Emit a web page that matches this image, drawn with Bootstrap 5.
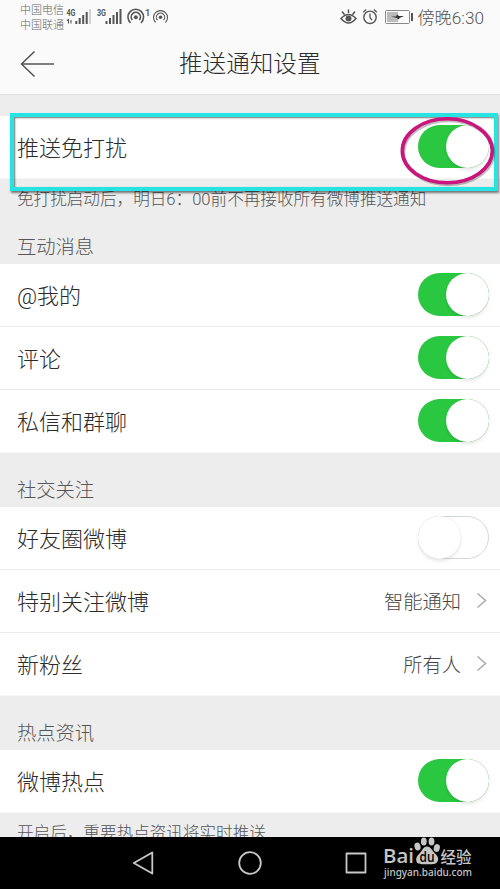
<!DOCTYPE html>
<html lang="zh-CN">
<head>
<meta charset="utf-8">
<meta name="viewport" content="width=device-width, initial-scale=1">
<title>推送通知设置</title>
<link href="https://cdn.jsdelivr.net/npm/bootstrap@5.3.0/dist/css/bootstrap.min.css" rel="stylesheet">
<style>
body{font-family:Roboto,"Noto Sans CJK SC",sans-serif;font-weight:300;color:#2b2b2b;background:#ededed;width:500px;height:889px}
.screen{height:889px}
.top-area{height:95px;background:#fafafa;border-bottom:1px solid #dcdcdc}
.status{height:34px;padding:0 16px 0 20px;color:#666}
.carrier{font-size:11px;line-height:15px;width:46px;padding-top:2px;color:#666}
.clock{font-size:17.2px;line-height:34px;color:#555;padding-top:1px}
.title-bar{height:60px;padding-left:20px}
.title-text{font-size:23.6px;line-height:60px;margin-left:125px}
.setting{height:63px;font-size:22px;padding:2px 11px 0 17px;background:#fff;border:0;border-bottom:1px solid #ebebeb;color:#2b2b2b}
.setting:last-child{border-bottom-color:#f6f6f6}
.section-name{font-size:19.3px;line-height:28px;color:#555;padding-left:17px}
.hint{font-size:16.6px;line-height:24px;color:#555;padding-left:17px}
.val{font-size:19.3px;color:#444;margin-right:16px;padding-top:2px}
.switch{width:71px;height:43px;border-radius:22px;background:#29c840;display:flex;justify-content:flex-end;margin-bottom:3px}
.switch .knob{width:43px;height:43px;border-radius:50%;background:#fff;box-shadow:0 3px 3px rgba(0,0,0,.07),0 0 1px rgba(0,0,0,.2)}
.switch.off{background:#fff;border:1px solid #d2dad5;justify-content:flex-start}
.switch.off .knob{margin:-1px}
.nav-keys{height:52px;background:#000}
.frame-mark{left:10px;top:113px;width:488px;height:78px;border:4px solid #27e4e4;box-shadow:1px 2px 2px rgba(0,0,0,.5),inset 1px 1px 2px rgba(0,0,0,.55)}
.ring-mark{left:396px;top:112px}
.brand{left:376px;top:832px}
</style>
<script src="https://cdn.jsdelivr.net/npm/bootstrap@5.3.0/dist/js/bootstrap.bundle.min.js"></script>
</head>
<body class="overflow-hidden">
<div class="screen position-relative d-flex flex-column overflow-hidden">
  <header class="top-area flex-shrink-0">
    <div class="status d-flex align-items-center">
      <div class="carrier text-nowrap">中国电信<br>中国联通</div>
      <svg width="106" height="34" viewBox="66 0 106 34" fill="none" stroke="#555">
        <g font-family="Roboto" font-weight="700" fill="#555" stroke="none">
          <text x="66.500" y="15.500" font-size="9.500" textLength="9" lengthAdjust="spacingAndGlyphs">4G</text>
          <text x="97" y="15.500" font-size="9.500" textLength="9" lengthAdjust="spacingAndGlyphs">3G</text>
          <text x="145" y="16" font-size="9.500" font-weight="500">1</text>
        </g>
        <path d="M67 20.500l1.500-1v4M71 20v3.500" stroke-width="1.100"/>
        <path d="M76.300 24v-3M79.700 24v-6M83.200 24v-9M86.700 24v-12" stroke-width="2"/>
        <path d="M90 24V9" stroke="#d2d2d2" stroke-width="2"/>
        <path d="M106.500 24v-3M110 24v-6M113.500 24v-9M117 24v-12M120.500 24V9" stroke-width="2"/>
        <path d="M130.500 22.800a7.800 7.800 0 1 1 10.500 0M132.300 20a4.600 4.600 0 1 1 7 0" stroke-width="1.600"/>
        <circle cx="135.800" cy="17.300" r="2" fill="#555" stroke="none"/>
        <path d="M155.500 22.500a7 7 0 1 1 10 0M157.500 20.200a4.200 4.200 0 1 1 6 0" stroke-width="1.100"/>
        <circle cx="160.500" cy="17.200" r="1.800" fill="#555" stroke="none"/>
      </svg>
      <svg class="ms-auto" width="78" height="34" viewBox="335 0 78 34" fill="none" stroke="#555">
        <path d="M341 18.500q7.500-8 15 0q-7.500 9-15 0zM342 11.500l2.500 3M348.500 9.500v3.500M355 11.500l-2.500 3" stroke-width="1.500"/>
        <circle cx="348.500" cy="18.500" r="3" fill="#555" stroke="none"/>
        <circle cx="370" cy="17.300" r="6.200" stroke-width="1.400"/>
        <path d="M370 13.500v4.200l2 2.500M363.200 12.200l3-2.700M376.800 12.200l-3-2.700" stroke-width="1.300"/>
        <rect x="385.500" y="10.500" width="24" height="13" rx="1" stroke="#888"/>
        <path d="M387 12h11v10h-11z" fill="#bbb" stroke="none"/>
        <path d="M391 16.500h5l1-2 2 1.500h5l-4 1.700-1.500 1.800-1.500-1.500z" fill="#333" stroke="none"/>
        <path d="M412 13v8" stroke-width="2"/>
      </svg>
      <span class="clock text-nowrap ms-1">傍晚6:30</span>
    </div>
    <div class="title-bar d-flex align-items-center">
      <svg width="34" height="28" viewBox="0 0 34 28" fill="none" stroke="#555" stroke-width="1.500"><path d="M14.500 1.500L1.500 14l13 12.500M1.500 14H34"/></svg>
      <span class="title-text text-nowrap">推送通知设置</span>
    </div>
  </header>

  <main class="flex-grow-1 overflow-hidden">
    <div class="list-group rounded-0" style="margin-top:21px">
      <div class="setting list-group-item rounded-0 d-flex align-items-center justify-content-between">推送免打扰<span class="switch"><span class="knob"></span></span></div>
    </div>
    <div class="hint text-nowrap" style="padding-top:9px">免打扰启动后，明日6：00前不再接收所有微博推送通知</div>
    <div class="section-name" style="margin-top:22px">互动消息</div>
    <div class="list-group rounded-0" style="margin-top:2px">
      <div class="setting list-group-item rounded-0 d-flex align-items-center justify-content-between">@我的<span class="switch"><span class="knob"></span></span></div>
      <div class="setting list-group-item rounded-0 d-flex align-items-center justify-content-between">评论<span class="switch"><span class="knob"></span></span></div>
      <div class="setting list-group-item rounded-0 d-flex align-items-center justify-content-between">私信和群聊<span class="switch"><span class="knob"></span></span></div>
    </div>
    <div class="section-name" style="padding-top:24px;height:54px">社交关注</div>
    <div class="list-group rounded-0">
      <div class="setting list-group-item rounded-0 d-flex align-items-center justify-content-between">好友圈微博<span class="switch off"><span class="knob"></span></span></div>
      <div class="setting list-group-item rounded-0 d-flex align-items-center">特别关注微博<span class="val ms-auto">智能通知</span><svg width="12" height="18" viewBox="1 1 12 18" fill="none" stroke="#aaa" stroke-width="1.500"><path d="M1.500 1.500L9.500 8.500l-8 7"/></svg></div>
      <div class="setting list-group-item rounded-0 d-flex align-items-center">新粉丝<span class="val ms-auto">所有人</span><svg width="12" height="18" viewBox="1 1 12 18" fill="none" stroke="#aaa" stroke-width="1.500"><path d="M1.500 1.500L9.500 8.500l-8 7"/></svg></div>
    </div>
    <div class="section-name" style="padding-top:24px;height:54px">热点资讯</div>
    <div class="list-group rounded-0">
      <div class="setting list-group-item rounded-0 d-flex align-items-center justify-content-between">微博热点<span class="switch"><span class="knob"></span></span></div>
    </div>
    <div class="hint text-nowrap" style="padding-top:9px">开启后，重要热点资讯将实时推送</div>
  </main>

  <footer class="nav-keys flex-shrink-0">
    <svg width="500" height="52" viewBox="0 837 500 52" fill="none" stroke="#c8c8c8" stroke-width="1.800" stroke-linejoin="round">
      <path d="M152.300 852.500v21l-18.500-10.500z"/><circle cx="250" cy="863" r="10.800"/><rect x="346.500" y="853.500" width="19" height="19"/>
    </svg>
  </footer>

  <div class="frame-mark position-absolute"></div>
  <svg class="ring-mark position-absolute" width="102" height="78" viewBox="396 112 102 78" fill="none">
    <ellipse cx="448.500" cy="152.500" rx="45" ry="32" stroke="#000" stroke-opacity=".25" stroke-width="3.500"/>
    <ellipse cx="447.300" cy="150.800" rx="45" ry="32" stroke="#c9157c" stroke-width="3.600"/>
  </svg>
  <svg class="brand position-absolute" width="104" height="50" viewBox="376 832 104 50" fill="#c6c6c6">
    <text x="383" y="863" font-family="Open Sans" font-size="20.500" font-weight="600" textLength="31" lengthAdjust="spacingAndGlyphs">Bai</text>
    <ellipse cx="417.500" cy="846.500" rx="3" ry="4" transform="rotate(-15 417.500 846.500)"/>
    <ellipse cx="423.800" cy="841.500" rx="2.900" ry="4"/>
    <ellipse cx="431.500" cy="841.500" rx="2.900" ry="4"/>
    <ellipse cx="436.800" cy="848" rx="3" ry="4" transform="rotate(15 436.800 848)"/>
    <path d="M427 846.500c4 0 5 4 8 7s4 5 2.500 8-5 2.800-10.500 2.800-9.500.2-10.500-2.800 0-5 3-8 3.500-7 7.500-7z"/>
    <text x="419.500" y="861.500" font-family="Open Sans" font-size="13.500" font-weight="600" fill="#000" textLength="15" lengthAdjust="spacingAndGlyphs">du</text>
    <text x="440.500" y="862.500" font-family="Noto Sans CJK SC" font-size="15.500" font-weight="500" textLength="31" lengthAdjust="spacingAndGlyphs">经验</text>
    <text x="384" y="875.500" font-family="Noto Sans" font-size="10.500" font-weight="500" textLength="88" lengthAdjust="spacingAndGlyphs">jingyan.baidu.com</text>
  </svg>
</div>
</body>
</html>
